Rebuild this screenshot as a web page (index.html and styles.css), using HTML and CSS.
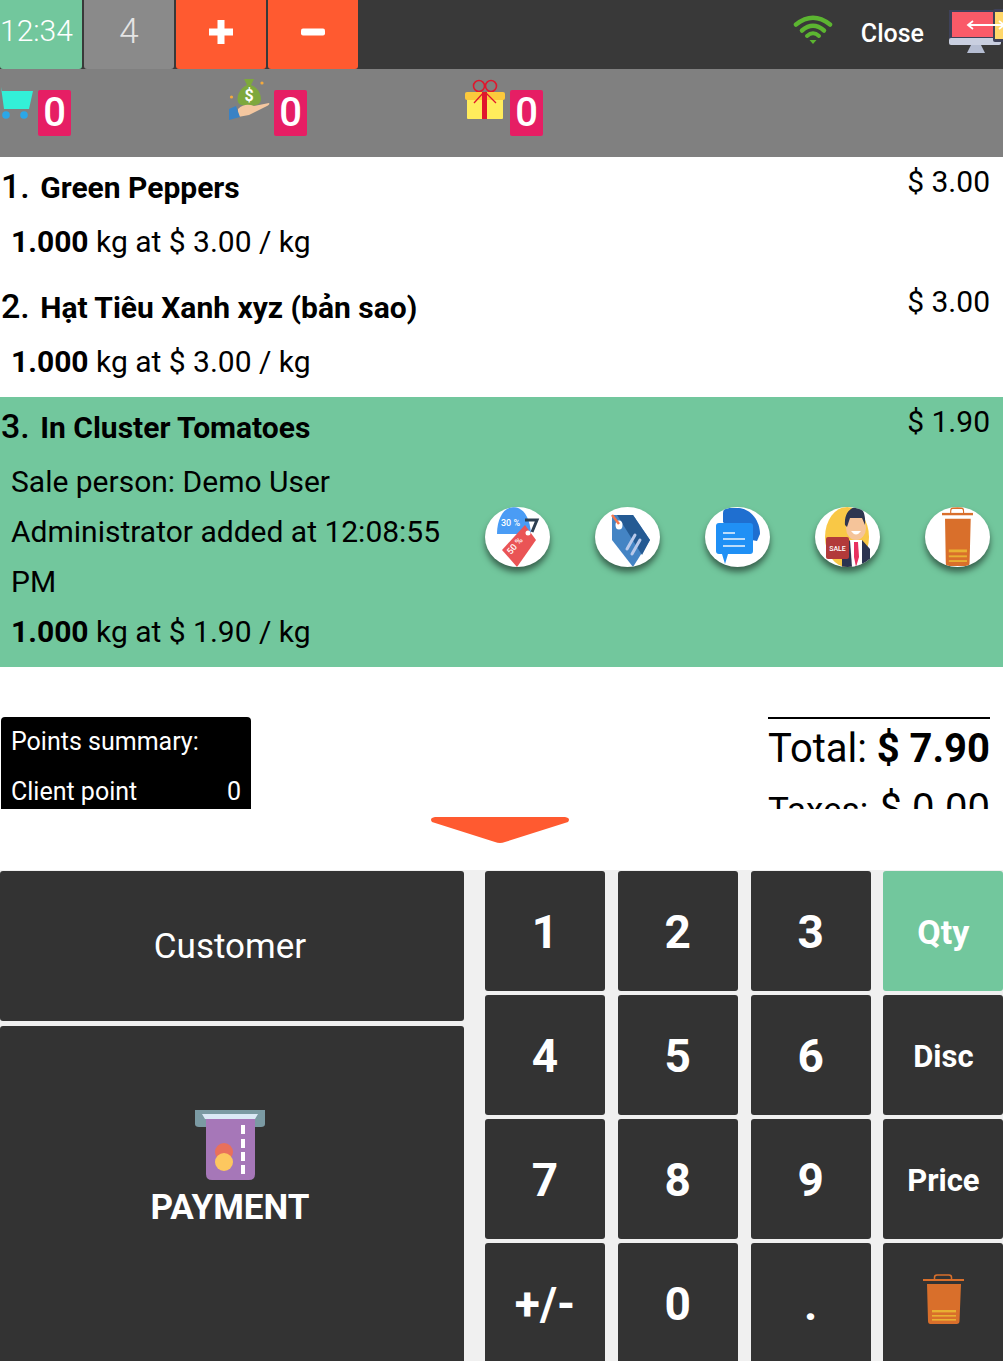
FILE: index.html
```html
<!DOCTYPE html>
<html lang="en">
<head>
    <meta charset="UTF-8">
    <meta name="viewport" content="width=device-width, initial-scale=1.0">
    <title>POS</title>
    <link rel="stylesheet" href="styles.css">
</head>
<body>
    <svg class="defs" width="0" height="0">
        <symbol id="trash" viewBox="0 0 41 50" preserveAspectRatio="none">
            <path d="M11.5 6V3.5Q11.5 1 14 1H26Q28.500 1 28.500 3.500V6" fill="none" stroke="#d96f2b" stroke-width="1.500"/>
            <rect x="0" y="5" width="41" height="2" fill="#d96f2b"/>
            <path d="M4 10H38L36.500 47Q36.500 50 33.500 50H7.500Q5 50 5 47Z" fill="#d96f2b"/>
            <rect x="9" y="36" width="24" height="2.400" fill="#e9b032"/>
            <rect x="9" y="41" width="24" height="1.600" fill="#e9b032"/>
            <rect x="9" y="45" width="24" height="1.600" fill="#e9b032"/>
        </symbol>
    </svg>

    <div class="topbar">
        <div class="tab tab-time">12:34</div>
        <div class="tab tab-count">4</div>
        <div class="tab tab-action">
            <svg width="24" height="24" viewBox="0 0 24 24"><path d="M9 0H15V9H24V15H15V24H9V15H0V9H9Z" fill="#fff" stroke="#fff" stroke-linejoin="round"/></svg>
        </div>
        <div class="tab tab-action">
            <svg width="24" height="8" viewBox="0 0 24 8"><rect width="24" height="7" y="0.500" rx="2" fill="#fff"/></svg>
        </div>
        <div class="topbar-right">
            <svg class="wifi" width="40" height="30" viewBox="0 0 40 30">
                <path d="M3 9.500Q20 -4 37 9.500" fill="none" stroke="#5cb531" stroke-width="4.500" stroke-linecap="round"/>
                <path d="M9 15.500Q20 6 31 15.500" fill="none" stroke="#5cb531" stroke-width="4.500" stroke-linecap="round"/>
                <path d="M14 21Q20 15.500 26 21" fill="none" stroke="#5cb531" stroke-width="4" stroke-linecap="round"/>
                <path d="M16.500 25H23.500L20 29Z" fill="#5cb531"/>
            </svg>
            <span class="close">Close</span>
            <svg class="screens" width="56" height="45" viewBox="0 0 56 45">
                <rect x="2" y="1" width="48" height="29" fill="#3e4159"/>
                <rect x="5" y="3" width="42" height="25" fill="#fa5a68"/>
                <rect x="2" y="29" width="52" height="7" rx="2" fill="#c9cfe0"/>
                <path d="M24 36H34L38 44H20Z" fill="#b5bdd2"/>
                <rect x="46" y="0" width="12" height="33" rx="2" fill="#3e4159"/>
                <rect x="48" y="3" width="10" height="27" fill="#ffd76a"/>
                <path d="M22 16H56M26 12L21 16L26 20M52 12L57 16L52 20" fill="none" stroke="#fff" stroke-width="1.800"/>
            </svg>
        </div>
    </div>

    <div class="stats">
        <div class="stat">
            <svg width="34" height="36" viewBox="0 0 34 36">
                <path d="M1 0L2 4H33L29 22H4Z" fill="#33f0d8"/>
                <circle cx="6" cy="28" r="3.800" fill="#2aa7e8"/>
                <circle cx="24" cy="28" r="3.800" fill="#2aa7e8"/>
            </svg>
            <span class="badge">0</span>
        </div>
        <div class="stat">
            <svg class="stat-icon" width="41" height="41" viewBox="0 0 41 41">
                <path d="M15 0H25L22 6C28 8 32 14 32 20C32 25 28 27 20 27C12 27 8.500 25 8.500 20C8.500 14 13 8 18 6Z" fill="#7ea83d"/>
                <text x="20" y="22" class="bag-sign">$</text>
                <path d="M9 30C14 25 20 25 25 27L40 24C41 25 40 26 38 27L20 36L9 38Z" fill="#f4c7a0"/>
                <path d="M0 30L7 27L11 38L0 41Z" fill="#3a82c4"/>
                <circle cx="33" cy="4" r="1.600" fill="#f4a93c"/>
                <circle cx="2.500" cy="18" r="1.600" fill="#f4a93c"/>
            </svg>
            <span class="badge">0</span>
        </div>
        <div class="stat">
            <svg class="stat-icon" width="41" height="41" viewBox="0 0 41 41">
                <circle cx="14" cy="7" r="5.500" fill="none" stroke="#e0172d" stroke-width="1.600"/>
                <circle cx="26" cy="7" r="5.500" fill="none" stroke="#e0172d" stroke-width="1.600"/>
                <rect x="2" y="20" width="36" height="20" rx="1" fill="#ffec5c"/>
                <rect x="0" y="13" width="40" height="8" rx="2" fill="#fbc93c"/>
                <rect x="17" y="13" width="5" height="27" fill="#e0172d"/>
                <path d="M19 13L9 24M20 13L31 24" stroke="#e0172d" stroke-width="1.300"/>
            </svg>
            <span class="badge">0</span>
        </div>
    </div>

    <div class="orderlines">
        <div class="line">
            <div class="line-head">
                <span class="line-name"><b>1.</b> Green Peppers</span>
                <span class="line-price">$ 3.00</span>
            </div>
            <div class="line-row"><strong>1.000</strong> kg at $ 3.00 / kg</div>
        </div>
        <div class="line">
            <div class="line-head">
                <span class="line-name"><b>2.</b> Hạt Tiêu Xanh xyz (bản sao)</span>
                <span class="line-price">$ 3.00</span>
            </div>
            <div class="line-row"><strong>1.000</strong> kg at $ 3.00 / kg</div>
        </div>
        <div class="line selected">
            <div class="line-head">
                <span class="line-name"><b>3.</b> In Cluster Tomatoes</span>
                <span class="line-price">$ 1.90</span>
            </div>
            <div class="line-body">
                <div class="line-info">
                    <div class="line-row">Sale person: Demo User Administrator added at 12:08:55 PM</div>
                    <div class="line-row"><strong>1.000</strong> kg at $ 1.90 / kg</div>
                </div>
                <div class="line-actions">
                    <div class="action">
                        <svg width="65" height="60" viewBox="0 0 65 60">
                            <path d="M12 27C12 10 20 0 28 0C38 0 45 10 46 27Z" fill="#4a9cf5"/>
                            <text x="16" y="19" class="tag-text">30 %</text>
                            <path d="M40 18L51 33L32 60L17 43Z" fill="#ea5455"/>
                            <circle cx="43" cy="26" r="2.500" fill="#fff"/>
                            <path d="M40 13H52L47 25" fill="none" stroke="#2d3e50" stroke-width="3"/>
                            <text x="26" y="48" class="tag-text" transform="rotate(-50 26 48)">50 %</text>
                        </svg>
                    </div>
                    <div class="action">
                        <svg width="65" height="60" viewBox="0 0 65 60">
                            <path d="M17 8H38L55 33L38 60L17 33Z" fill="#4484c4"/>
                            <path d="M22 8H38L55 33L47 48Z" fill="#245a93"/>
                            <ellipse cx="24" cy="18" rx="3.500" ry="4.500" fill="#fff"/>
                            <path d="M17 8L24 17" stroke="#f4764b" stroke-width="2.500"/>
                            <path d="M32 42L40 28M37 47L45 33" stroke="#b9c9ea" stroke-width="3" stroke-linecap="round"/>
                        </svg>
                    </div>
                    <div class="action">
                        <svg width="65" height="60" viewBox="0 0 65 60">
                            <path d="M18 15V6Q18 1 24 1H34C46 2 55 14 55 27L52 34L30 30Z" fill="#1f6fd0"/>
                            <path d="M14 16H45Q48 16 48 19V44Q48 47 45 47H23L20 57L17 47H14Q11 47 11 44V19Q11 16 14 16Z" fill="#2090f5"/>
                            <path d="M18 26H30M18 32H40M18 39H40" stroke="#bcdcfa" stroke-width="2"/>
                        </svg>
                    </div>
                    <div class="action">
                        <svg width="65" height="60" viewBox="0 0 65 60">
                            <ellipse cx="32" cy="30" rx="22" ry="30" fill="#f9c846"/>
                            <path d="M27 42L35 33H47L55 42V55L46 60H27Z" fill="#2b3350"/>
                            <path d="M35 33H47V60H37Z" fill="#fff"/>
                            <path d="M39 35H43L44 50L41 60L39 50Z" fill="#e8305f"/>
                            <ellipse cx="41" cy="21" rx="10" ry="12" fill="#f5c49a"/>
                            <path d="M30 18C29 7 35 0 42 0C48 0 51 8 50 18L47 11H35L32 20Z" fill="#2e3650"/>
                            <path d="M36 24Q41 31 46 24Z" fill="#fff"/>
                            <rect x="11" y="30" width="23" height="22" rx="2" fill="#b23a3a"/>
                            <text x="22.500" y="44" class="sale-text">SALE</text>
                        </svg>
                    </div>
                    <div class="action action-trash">
                        <svg width="31" height="59"><use href="#trash"/></svg>
                    </div>
                </div>
            </div>
        </div>
    </div>

    <div class="summary">
        <div class="points">
            <div class="points-row">Points summary:</div>
            <div class="points-row"><span>Client point</span><span>0</span></div>
        </div>
        <div class="totals">
            <div class="total-row"><span>Total:</span><strong>$ 7.90</strong></div>
            <div class="total-row"><span class="taxes-label">Taxes:</span><span>$ 0.00</span></div>
        </div>
    </div>

    <div class="toggle">
        <svg width="140" height="27" viewBox="0 0 140 27">
            <path d="M5 0H135Q141 1 138 5L75 25Q70 27 65 25L2 5Q-1 1 5 0Z" fill="#ff5a30"/>
        </svg>
    </div>

    <div class="pad">
        <div class="pad-left">
            <button class="tile customer">Customer</button>
            <button class="tile payment">
                <svg width="70" height="70" viewBox="0 0 70 70">
                    <path d="M0 0H70V14Q70 17 66 17H4Q0 17 0 14Z" fill="#7b9aa3"/>
                    <path d="M7 4H63L60 9H10Z" fill="#dbe9f6"/>
                    <path d="M11 9H60V64Q60 70 54 70H17Q11 70 11 64Z" fill="#a677b8"/>
                    <rect x="46" y="15" width="4" height="9" fill="#fff"/>
                    <rect x="46" y="29" width="4" height="9" fill="#fff"/>
                    <rect x="46" y="42" width="4" height="9" fill="#fff"/>
                    <rect x="46" y="55" width="4" height="9" fill="#fff"/>
                    <circle cx="29" cy="42" r="9" fill="#e9705b"/>
                    <circle cx="29" cy="52" r="9" fill="#fdc75f"/>
                </svg>
                <span>PAYMENT</span>
            </button>
        </div>
        <div class="pad-keys">
            <button class="tile key">1</button>
            <button class="tile key">2</button>
            <button class="tile key">3</button>
            <button class="tile key mode active">Qty</button>
            <button class="tile key">4</button>
            <button class="tile key">5</button>
            <button class="tile key">6</button>
            <button class="tile key mode">Disc</button>
            <button class="tile key">7</button>
            <button class="tile key">8</button>
            <button class="tile key">9</button>
            <button class="tile key mode">Price</button>
            <button class="tile key">+/-</button>
            <button class="tile key">0</button>
            <button class="tile key">.</button>
            <button class="tile key"><svg class="key-trash" width="41" height="50"><use href="#trash"/></svg></button>
        </div>
    </div>
</body>
</html>
```

FILE: styles.css
```css
* {
    box-sizing: border-box;
}
html, body {
    height: 100%;
}
body {
    margin: 0;
    font-family: Roboto, "Liberation Sans", sans-serif;
    color: #000;
    background-color: #fff;
    overflow: hidden;
}
.defs {
    display: block;
    height: 0;
}
.topbar {
    display: flex;
    height: 69px;
    background-color: #393939;
}
.tab {
    display: flex;
    align-items: center;
    justify-content: center;
    width: 90px;
    margin-right: 2px;
    padding-bottom: 6px;
    border-radius: 0 0 3px 3px;
    color: #fff;
}
.tab-time {
    justify-content: flex-start;
    width: 82px;
    padding-bottom: 8px;
    background-color: #72c79d;
    font-size: 30px;
    font-weight: 300;
}
.tab-count {
    background-color: #8a8a8a;
    color: #e4e4e4;
    font-size: 35px;
    font-weight: 300;
}
.tab-action {
    background-color: #ff5a30;
}
.topbar-right {
    display: flex;
    align-items: center;
    margin-left: auto;
    padding-bottom: 4px;
}
.wifi {
    margin: -5px 28px 0 0;
}
.close {
    color: #fff;
    font-size: 25px;
    font-weight: 500;
    margin: 2px 23px 0 0;
}
.screens {
    margin-top: -3px;
}
.stats {
    display: flex;
    gap: 165px;
    height: 88px;
    background-color: #808080;
}
.stat {
    display: flex;
    justify-content: flex-end;
    gap: 4px;
    width: 71px;
}
.stat svg {
    flex: none;
    margin-top: 18px;
}
.stat .stat-icon {
    margin-top: 10px;
}
.badge {
    flex: none;
    width: 33px;
    height: 46px;
    margin-top: 21px;
    border-radius: 2px;
    background-color: #e61e64;
    color: #fff;
    font-size: 40px;
    font-weight: 500;
    line-height: 46px;
    text-align: center;
}
.bag-sign {
    fill: #fff;
    font-size: 16px;
    font-weight: 700;
    text-anchor: middle;
}
.line {
    padding: 0 13px 10px 0;
}
.line-head {
    display: flex;
    justify-content: space-between;
    height: 60px;
}
.line-name {
    padding: 11px 0 0 1px;
    font-size: 30px;
    font-weight: 700;
    line-height: 36px;
}
.line-name b {
    font-size: 34px;
    font-weight: 500;
    margin-right: 3px;
}
.line-price {
    font-size: 30px;
    line-height: 50px;
}
.line-row {
    padding-left: 11px;
    font-size: 30px;
    line-height: 50px;
}
.line-row strong {
    font-weight: 700;
}
.selected {
    background-color: #72c79d;
}
.line-body {
    display: flex;
    justify-content: space-between;
}
.line-info {
    width: 445px;
}
.line-actions {
    display: flex;
    gap: 45px;
    margin-top: 50px;
}
.action {
    display: flex;
    justify-content: center;
    width: 65px;
    height: 60px;
    border-radius: 50%;
    overflow: hidden;
    background-color: #fff;
    box-shadow: 0 5px 6px rgba(0, 0, 0, 0.5);
}
.tag-text {
    fill: #fff;
    font-size: 9px;
    font-weight: 500;
}
.sale-text {
    fill: #fff;
    font-size: 7px;
    font-weight: 500;
    text-anchor: middle;
}
.summary {
    display: flex;
    justify-content: space-between;
    height: 142px;
    padding: 50px 13px 0 1px;
    overflow: hidden;
}
.points {
    width: 250px;
    height: 92px;
    border-radius: 4px 4px 0 0;
    background-color: #000;
    color: #fff;
    font-size: 25px;
    line-height: 50px;
    overflow: hidden;
}
.points-row {
    display: flex;
    justify-content: space-between;
    padding: 0 10px;
}
.totals {
    width: 222px;
    border-top: 2px solid #000;
    font-size: 40px;
    line-height: 60px;
    white-space: nowrap;
}
.total-row {
    display: flex;
    justify-content: space-between;
    align-items: baseline;
}
.totals strong {
    font-weight: 700;
}
.taxes-label {
    font-size: 35px;
}
.toggle {
    display: flex;
    justify-content: center;
    height: 61px;
    padding-top: 8px;
    margin-left: -3px;
}
.pad {
    display: flex;
    gap: 21px;
    height: 491px;
    padding-top: 1px;
    background-color: #f0f0f0;
    overflow: hidden;
}
.tile {
    border: none;
    border-radius: 3px;
    padding: 0;
    background-color: #333;
    color: #fff;
    font-family: inherit;
}
.pad-left {
    display: flex;
    flex-direction: column;
    gap: 5px;
    width: 464px;
    flex: none;
}
.customer {
    flex: none;
    height: 150px;
    padding-right: 4px;
    font-size: 35px;
}
.payment {
    display: flex;
    flex-direction: column;
    align-items: center;
    flex: none;
    height: 340px;
    padding: 84px 4px 0 0;
    font-size: 35px;
    font-weight: 700;
}
.payment span {
    line-height: 44px;
    margin-top: 6px;
}
.pad-keys {
    display: grid;
    grid-template-columns: repeat(4, 120px);
    grid-auto-rows: 120px;
    column-gap: 12.8px;
    row-gap: 4px;
}
.key {
    display: flex;
    align-items: center;
    justify-content: center;
    padding-top: 2px;
    font-size: 46px;
    font-weight: 700;
}
.key-trash {
    margin-bottom: 10px;
}
.mode {
    font-size: 31px;
}
.active {
    background-color: #72c79d;
    font-size: 34px;
}
```
